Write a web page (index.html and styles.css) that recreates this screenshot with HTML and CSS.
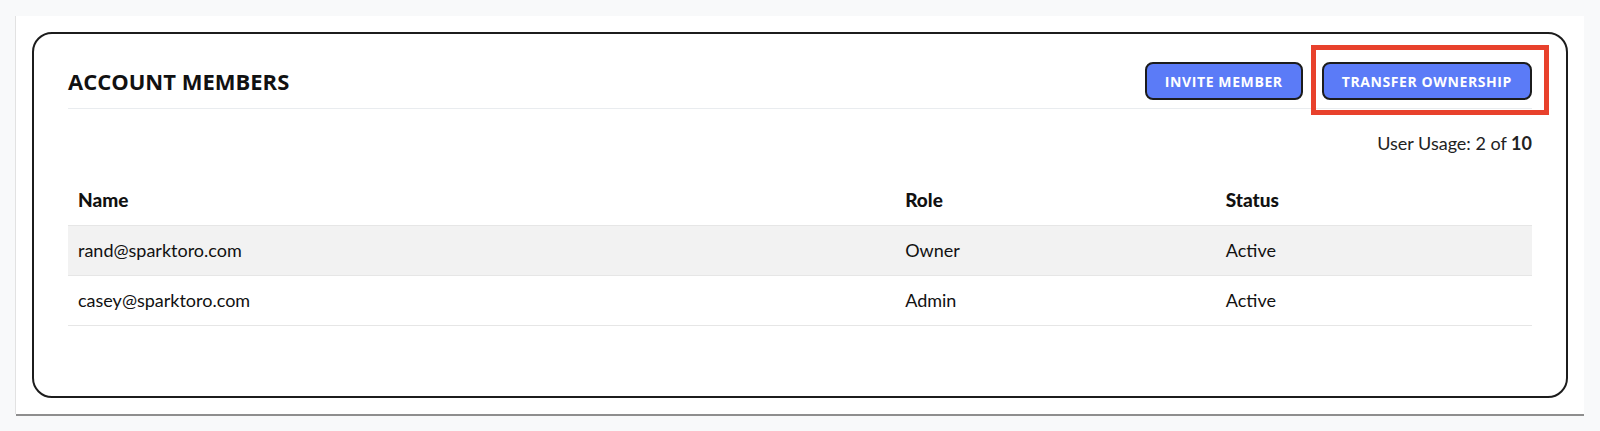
FILE: index.html
```html
<!DOCTYPE html>
<html lang="en">
<head>
    <meta charset="UTF-8">
    <meta name="viewport" content="width=device-width, initial-scale=1.0">
    <title>Account Members</title>
    <link rel="stylesheet" href="styles.css">
</head>
<body>
    <div class="panel">
        <div class="card">
            <div class="card-header">
                <h2>ACCOUNT MEMBERS</h2>
                <div class="actions">
                    <button class="btn">INVITE MEMBER</button>
                    <span class="highlight">
                        <button class="btn">TRANSFER OWNERSHIP</button>
                    </span>
                </div>
            </div>

            <p class="usage">User Usage: 2 of <strong>10</strong></p>

            <table class="members">
                <thead>
                    <tr>
                        <th class="col-name">Name</th>
                        <th class="col-role">Role</th>
                        <th>Status</th>
                    </tr>
                </thead>
                <tbody>
                    <tr class="shaded">
                        <td>rand@sparktoro.com</td>
                        <td>Owner</td>
                        <td>Active</td>
                    </tr>
                    <tr>
                        <td>casey@sparktoro.com</td>
                        <td>Admin</td>
                        <td>Active</td>
                    </tr>
                </tbody>
            </table>
        </div>
    </div>
</body>
</html>
```

FILE: styles.css
```css
body {
    margin: 0;
    padding: 16px;
    background-color: #f8f9fa;
    font-family: Lato, "Open Sans", sans-serif;
    color: #111;
}

.panel {
    background: white;
    padding: 16px;
    box-shadow: 0 2px 0 #8e8e8e, -1px 0 0 #e2e2e2;
}

.card {
    border: 2px solid #1c1c1c;
    border-radius: 20px;
    padding: 0 34px 70px;
}

.card-header {
    display: flex;
    justify-content: space-between;
    align-items: center;
    padding: 28px 0 8px;
    border-bottom: 1px solid #e9ecef;
}

h2 {
    margin: 0;
    font-family: "Open Sans", sans-serif;
    font-weight: 700;
    font-size: 22px;
    color: #111;
}

.actions {
    display: flex;
    gap: 19px;
}

.btn {
    height: 38px;
    padding: 0 18px;
    background-color: #5b7bf7;
    color: white;
    border: 2px solid #1c1c1c;
    border-radius: 8px;
    font-family: "Open Sans", sans-serif;
    font-weight: 700;
    font-size: 14px;
    letter-spacing: 0.6px;
    cursor: pointer;
}

.highlight {
    position: relative;
    display: inline-block;
}

.highlight::after {
    content: "";
    position: absolute;
    top: -17px;
    right: -17px;
    bottom: -15px;
    left: -11px;
    border: 5px solid #e8412c;
    pointer-events: none;
}

.usage {
    margin: 22px 0 20px;
    text-align: right;
    font-size: 18px;
    line-height: 24px;
    color: #222;
}

.usage strong {
    font-weight: 700;
}

.members {
    width: 100%;
    border-collapse: collapse;
    font-size: 18px;
}

.members th,
.members td {
    height: 50px;
    padding: 0 10px;
    text-align: left;
    box-sizing: border-box;
}

.members th {
    font-weight: 900;
    font-size: 19px;
}

.members td {
    border-bottom: 1px solid #e6e6e6;
}

.members thead tr {
    border-bottom: 1px solid #e6e6e6;
}

.col-name {
    width: 56.5%;
}

.col-role {
    width: 21.9%;
}

.shaded {
    background-color: #f2f2f2;
}
```
